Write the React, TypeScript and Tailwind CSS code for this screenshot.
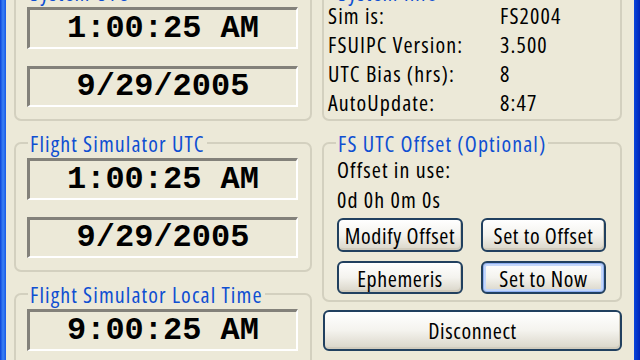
import type { ReactNode } from "react"

const face = "font-['Open_Sans','Liberation_Sans',Arial,sans-serif] [font-stretch:condensed] text-[22px]"
const ui = `${face} tracking-[1.1px]`

function Group({ title, className = "", children }: { title: string; className?: string; children: ReactNode }) {
  return (
    <fieldset className={`rounded-[7px] border-2 border-[#d3d0bf] ${className}`}>
      <legend className={`ml-[12px] px-[2px] leading-[24px] text-[#0f4fd2] ${ui}`}>{title}</legend>
      {children}
    </fieldset>
  )
}

function Readout({ value, tall }: { value: string; tall?: boolean }) {
  return (
    <div
      className={`flex items-center justify-center border-t-[3px] border-l-[3px] border-b-2 border-r-2 border-t-[#83817a] border-l-[#83817a] border-b-white border-r-white bg-[#ece9d8] font-['Liberation_Mono','Courier_New',monospace] text-[32px] font-bold leading-none text-black ${
        tall ? "h-[42px]" : "h-[41px]"
      }`}
    >
      {value}
    </div>
  )
}

function ClockGroup({ title, time, date }: { title: string; time: string; date?: string }) {
  return (
    <Group title={title} className="h-[141px] shrink-0">
      <div className="flex flex-col gap-[17px] pl-[11px] pr-[12px] pt-[3px]">
        <Readout value={time} tall />
        {date && <Readout value={date} />}
      </div>
    </Group>
  )
}

function XpButton({ label, focused, className = "" }: { label: string; focused?: boolean; className?: string }) {
  return (
    <button
      className={`flex items-center justify-center rounded-[6px] border-2 border-[#21405f] bg-linear-to-b from-white via-[#f4f3ee] to-[#d9d5c8] tracking-[0.6px] text-black ${face} ${
        focused ? "shadow-[inset_0_0_0_1px_#8fb0f2,inset_0_0_0_3px_#c4d7fa]" : "shadow-[inset_-1px_-2px_0_#d0cbbd]"
      } ${className}`}
    >
      {label}
    </button>
  )
}

const info = [
  ["Sim is:", "FS2004"],
  ["FSUIPC Version:", "3.500"],
  ["UTC Bias (hrs):", "8"],
  ["AutoUpdate:", "8:47"],
]

export default function App() {
  return (
    <div className="flex h-[360px] w-[640px] overflow-hidden bg-[#ece9d8]">
      {/* window frame, left */}
      <div className="w-[6px] shrink-0 bg-linear-to-r from-[#0a3fd9] via-[#3b80f4] to-[#1758e6]" />

      <div className="-mt-[20px] flex flex-1 gap-[10px] pl-[8px] pr-[12px]">
        {/* left column */}
        <div className="flex w-[298px] shrink-0 flex-col gap-[10px]">
          <ClockGroup title="System UTC" time="1:00:25 AM" date="9/29/2005" />
          <ClockGroup title="Flight Simulator UTC" time="1:00:25 AM" date="9/29/2005" />
          <ClockGroup title="Flight Simulator Local Time" time="9:00:25 AM" date="9/29/2005" />
        </div>

        {/* right column */}
        <div className="flex w-[300px] shrink-0 flex-col gap-[10px]">
          <Group title="System Info" className="h-[141px] shrink-0">
            <div className={`-mt-[3px] grid grid-cols-[172px_1fr] pl-[4px] leading-[29px] text-black ${ui}`}>
              {info.map(([k, v]) => (
                <div key={k} className="contents">
                  <span>{k}</span>
                  <span>{v}</span>
                </div>
              ))}
            </div>
          </Group>

          <Group title="FS UTC Offset (Optional)" className="h-[171px] shrink-0">
            <div className={`-mt-[1px] flex flex-col pl-[13px] pr-[14px] leading-[30px] text-black ${ui}`}>
              <span>Offset in use:</span>
              <span>0d 0h 0m 0s</span>
              <div className="mt-[4px] grid grid-cols-[126px_125px] gap-x-[18px] gap-y-[9px]">
                <XpButton label="Modify Offset" className="h-[34px]" />
                <XpButton label="Set to Offset" className="h-[34px]" />
                <XpButton label="Ephemeris" className="h-[33px]" />
                <XpButton label="Set to Now" focused className="h-[33px]" />
              </div>
            </div>
          </Group>

          <XpButton label="Disconnect" className="-mt-[2px] ml-[1px] h-[41px] w-[299px]" />
        </div>
      </div>

      {/* window frame, right */}
      <div className="w-[6px] shrink-0 bg-linear-to-r from-[#0b45dc] to-[#0024b8]" />
    </div>
  )
}
